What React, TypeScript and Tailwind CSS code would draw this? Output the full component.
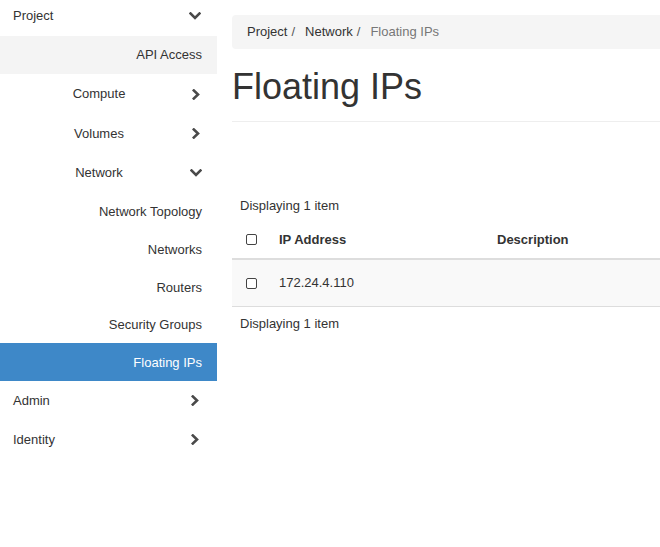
function ChevronDown() {
  return (
    <svg width="12" height="8" viewBox="0 0 12 8" className="shrink-0">
      <path d="M1.5 1.5 L6 6 L10.5 1.5" fill="none" stroke="#4a4a4a" strokeWidth="2.6" strokeLinecap="square" />
    </svg>
  );
}

function ChevronRight() {
  return (
    <svg width="8" height="11" viewBox="0 0 8 11" className="shrink-0">
      <path d="M1.8 1.5 L6 5.5 L1.8 9.5" fill="none" stroke="#4a4a4a" strokeWidth="2.6" strokeLinecap="square" />
    </svg>
  );
}

function Checkbox() {
  return <div className="w-[11px] h-[11px] border border-[#444] rounded-[2px] bg-white" />;
}

type Sub = { label: string; h: string; active?: boolean };

const networkItems: Sub[] = [
  { label: "Network Topology", h: "h-[39px]" },
  { label: "Networks", h: "h-[38px]" },
  { label: "Routers", h: "h-[37px]" },
  { label: "Security Groups", h: "h-[38px]" },
  { label: "Floating IPs", h: "h-[38px]", active: true },
];

function Sidebar() {
  return (
    <aside className="w-[217px] shrink-0 text-[13px] text-[#333]">
      <div className="h-[36px] pb-[4px] flex items-center justify-between pl-[13px] pr-[16px]">
        <span>Project</span>
        <ChevronDown />
      </div>
      <div className="h-[38px] bg-[#f4f4f4] flex items-center justify-end pr-[15px]">API Access</div>
      <div className="h-[39px] pt-[1px] flex items-center">
        <span className="w-[198px] text-center">Compute</span>
        <span className="-ml-[6px]">
          <ChevronRight />
        </span>
      </div>
      <div className="h-[39px] pt-[2px] flex items-center">
        <span className="w-[198px] text-center">Volumes</span>
        <span className="-ml-[6px]">
          <ChevronRight />
        </span>
      </div>
      <div className="h-[39px] pt-[2px] flex items-center">
        <span className="w-[198px] text-center">Network</span>
        <span className="-ml-[8px]">
          <ChevronDown />
        </span>
      </div>
      {networkItems.map((s) => (
        <div
          key={s.label}
          className={`${s.h} pt-[2px] flex items-center justify-end pr-[15px] ${s.active ? "bg-[#3e88c8] text-white" : ""}`}
        >
          {s.label}
        </div>
      ))}
      {["Admin", "Identity"].map((l) => (
        <div key={l} className="h-[39px] flex items-center justify-between pl-[13px] pr-[18px]">
          <span>{l}</span>
          <ChevronRight />
        </div>
      ))}
    </aside>
  );
}

export default function App() {
  return (
    <div className="w-[660px] h-[547px] bg-white overflow-hidden flex" style={{ fontFamily: '"Liberation Sans", Arial, sans-serif' }}>
      <Sidebar />
      <main className="flex-1 pl-[15px] pt-[15px]">
        <div className="h-[34px] bg-[#f5f5f5] rounded-l-[4px] flex items-center px-[15px] text-[13px]">
          <span className="text-[#333]">Project</span>
          <span className="ml-[4px] mr-[10px] text-[#555]">/</span>
          <span className="text-[#333]">Network</span>
          <span className="ml-[4px] mr-[10px] text-[#555]">/</span>
          <span className="text-[#777]">Floating IPs</span>
        </div>
        <div className="mt-[18px] pb-[14px] border-b border-[#eee]">
          <h1 className="text-[36px] leading-[40px] text-[#333] font-normal">Floating IPs</h1>
        </div>
        <div className="mt-[67px] text-[13px] text-[#333]">
          <div className="h-[33px] flex items-center pl-[8px]">Displaying 1 item</div>
          <div className="h-[38px] pb-[1px] flex items-center border-b-2 border-[#ddd] font-bold">
            <div className="w-[39px] pl-[14px] flex items-center">
              <Checkbox />
            </div>
            <div className="w-[218px] pl-[8px]">IP Address</div>
            <div className="pl-[8px]">Description</div>
          </div>
          <div className="h-[47px] flex items-center bg-[#f9f9f9] border-b border-[#ddd]">
            <div className="w-[39px] pl-[14px] flex items-center">
              <Checkbox />
            </div>
            <div className="w-[218px] pl-[8px]">172.24.4.110</div>
            <div className="pl-[8px]"></div>
          </div>
          <div className="h-[33px] flex items-center pl-[8px]">Displaying 1 item</div>
        </div>
      </main>
    </div>
  );
}
